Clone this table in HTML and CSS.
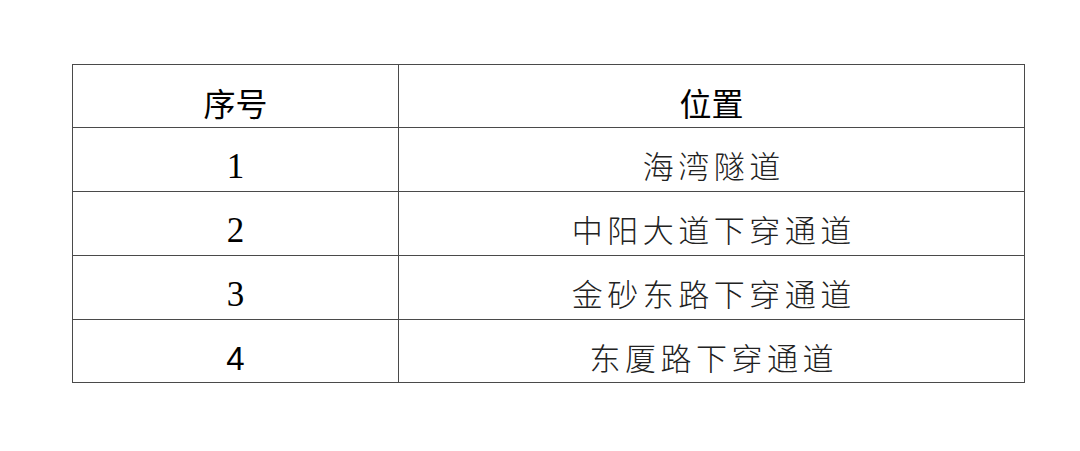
FILE: index.html
```html
<!DOCTYPE html>
<html lang="zh">
<head>
<meta charset="utf-8">
<link rel="stylesheet" href="styles.css">
</head>
<body>
<table class="grid">
  <tr class="head">
    <th class="c1">序号</th>
    <th class="c2">位置</th>
  </tr>
  <tr>
    <td class="c1 num">1</td>
    <td class="c2 txt">海湾隧道</td>
  </tr>
  <tr>
    <td class="c1 num">2</td>
    <td class="c2 txt">中阳大道下穿通道</td>
  </tr>
  <tr>
    <td class="c1 num">3</td>
    <td class="c2 txt">金砂东路下穿通道</td>
  </tr>
  <tr class="last">
    <td class="c1 num sans">4</td>
    <td class="c2 txt">东厦路下穿通道</td>
  </tr>
</table>
</body>
</html>
```
FILE: styles.css
```css
html, body {
  margin: 0;
  padding: 0;
  background: #ffffff;
}
body {
  padding: 64px 0 0 72px;
}
.grid {
  border-collapse: collapse;
  width: 953px;
  table-layout: fixed;
}
.grid th, .grid td {
  border: 1px solid #4a4a4a;
  padding: 0;
  height: 63px;
  box-sizing: border-box;
  text-align: center;
  vertical-align: top;
  color: #111;
}
.grid .c1 {
  width: 326px;
}
.grid .head th {
  font-family: "Noto Sans CJK SC", sans-serif;
  font-size: 32px;
  font-weight: 400;
  line-height: 32px;
  padding-top: 21px;
  color: #000;
}
.grid .txt {
  font-family: "Noto Sans CJK SC", sans-serif;
  font-size: 31px;
  font-weight: 300;
  letter-spacing: 4.5px;
  text-indent: 4.5px;
  line-height: 32px;
  padding-top: 21px;
  color: #222;
}
.grid .num {
  font-family: "Liberation Serif", serif;
  font-size: 35px;
  line-height: 32px;
  padding-top: 23px;
  color: #000;
}
.grid .num.sans {
  font-family: "Liberation Sans", sans-serif;
  font-size: 33px;
}
.grid tr:not(.head) td {
  height: 64px;
}
.grid tr.last td {
  height: 63px;
}
```
